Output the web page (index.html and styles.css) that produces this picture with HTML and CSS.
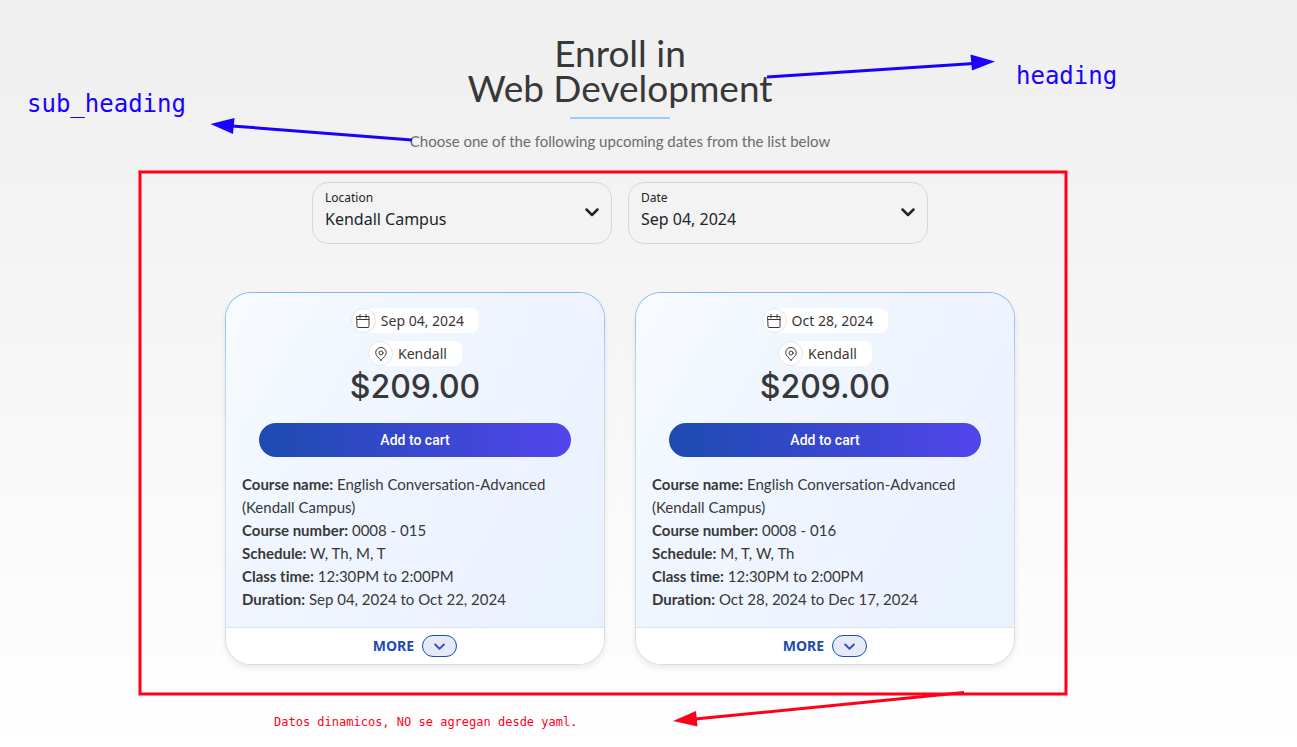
FILE: index.html
```
<!DOCTYPE html>
<html lang="en">
  <head>
    <meta charset="utf-8" />
    <title>Enroll in Web Development</title>
    <link rel="stylesheet" href="styles.css">
  </head>
  <body>
    <svg class="icon-defs" aria-hidden="true">
      <symbol id="icon-calendar" viewBox="0 0 14 14">
        <path d="M1 2.500h12v10a1 1 0 0 1-1 1H2a1 1 0 0 1-1-1zM1 5.500h12M4 .5v3.500M10 .5v3.500" />
      </symbol>
      <symbol id="icon-pin" viewBox="0 0 14 14">
        <path d="M7 13.300C4.500 10.500 1.700 8.300 1.700 5.700a5.300 5.200 0 0 1 10.600 0C12.300 8.300 9.500 10.500 7 13.300z" />
        <circle cx="7" cy="6" r="2" />
      </symbol>
      <symbol id="icon-chevron" viewBox="0 0 14 14">
        <path d="M1.500 4.500 7 10l5.500-5.500" />
      </symbol>
    </svg>

    <main class="page">
      <header class="intro">
        <h1 class="heading">Enroll in<br />Web Development</h1>
        <p class="sub-heading">Choose one of the following upcoming dates from the list below</p>
      </header>

      <form class="filters">
        <div class="field">
          <label for="location">Location</label>
          <select id="location">
            <option>Kendall Campus</option>
          </select>
          <svg class="field-icon"><use href="#icon-chevron" /></svg>
        </div>
        <div class="field">
          <label for="date">Date</label>
          <select id="date">
            <option>Sep 04, 2024</option>
            <option>Oct 28, 2024</option>
          </select>
          <svg class="field-icon"><use href="#icon-chevron" /></svg>
        </div>
      </form>

      <section class="cards">
        <article class="card">
          <div class="card-body">
            <div class="tag">
              <span class="tag-icon"><svg><use href="#icon-calendar" /></svg></span>
              Sep 04, 2024
            </div>
            <div class="tag">
              <span class="tag-icon"><svg><use href="#icon-pin" /></svg></span>
              Kendall
            </div>
            <div class="price">$209.00</div>
            <button class="add-button" type="button">Add to cart</button>
            <div class="details">
              <div><strong>Course name:</strong> English Conversation-Advanced (Kendall Campus)</div>
              <div><strong>Course number:</strong> 0008 - 015</div>
              <div><strong>Schedule:</strong> W, Th, M, T</div>
              <div><strong>Class time:</strong> 12:30PM to 2:00PM</div>
              <div><strong>Duration:</strong> Sep 04, 2024 to Oct 22, 2024</div>
            </div>
          </div>
          <button class="more-button" type="button">
            MORE
            <span class="more-icon"><svg><use href="#icon-chevron" /></svg></span>
          </button>
        </article>

        <article class="card">
          <div class="card-body">
            <div class="tag">
              <span class="tag-icon"><svg><use href="#icon-calendar" /></svg></span>
              Oct 28, 2024
            </div>
            <div class="tag">
              <span class="tag-icon"><svg><use href="#icon-pin" /></svg></span>
              Kendall
            </div>
            <div class="price">$209.00</div>
            <button class="add-button" type="button">Add to cart</button>
            <div class="details">
              <div><strong>Course name:</strong> English Conversation-Advanced (Kendall Campus)</div>
              <div><strong>Course number:</strong> 0008 - 016</div>
              <div><strong>Schedule:</strong> M, T, W, Th</div>
              <div><strong>Class time:</strong> 12:30PM to 2:00PM</div>
              <div><strong>Duration:</strong> Oct 28, 2024 to Dec 17, 2024</div>
            </div>
          </div>
          <button class="more-button" type="button">
            MORE
            <span class="more-icon"><svg><use href="#icon-chevron" /></svg></span>
          </button>
        </article>
      </section>
    </main>

    <!-- notes drawn over the page -->
    <div class="notes">
      <svg class="note-lines" width="1297" height="747">
        <g class="blue">
          <path d="M767 77 974 63.500M412 140 232 126" />
          <path class="tip" d="M970.500 54.500 995 61.500 972 70.500zM210.500 124 234.500 118 233 134z" />
        </g>
        <g class="red">
          <rect x="140" y="172" width="926" height="522" />
          <path d="M964 692.500 695 719" />
          <path class="tip" d="M673 721 696 711 697.500 726.500z" />
        </g>
      </svg>
      <span class="note note-heading">heading</span>
      <span class="note note-sub">sub_heading</span>
      <span class="note note-data">Datos dinamicos, NO se agregan desde yaml.</span>
    </div>
  </body>
</html>
```
FILE: styles.css
```
* {
  box-sizing: border-box;
}

body {
  margin: 0;
  min-height: 100vh;
  position: relative;
  color: #383838;
  font-family: "Noto Sans", sans-serif;
  font-size: 14px;
  font-variant-ligatures: none;
  background: linear-gradient(#efefef, #f2f2f2 22%, #fff);
}

.icon-defs {
  display: none;
}

svg {
  display: block;
  fill: none;
  stroke: currentColor;
  stroke-linecap: round;
  stroke-linejoin: round;
}

.page {
  max-width: 1240px;
  padding-top: 35px;
}

.intro {
  text-align: center;
}

.heading {
  margin: 0;
  font-family: Lato, sans-serif;
  font-size: 37px;
  font-weight: 400;
  line-height: 35px;
}

.heading::after {
  content: "";
  display: block;
  width: 100px;
  height: 2px;
  margin: 12px auto 0;
  background: #9ec8ff;
}

.sub-heading {
  margin: 11px 0 0;
  color: #6c6c6c;
  font-family: Lato, sans-serif;
  font-size: 15px;
  line-height: 22px;
}

.filters {
  display: flex;
  justify-content: center;
  gap: 16px;
  margin-top: 30px;
}

.field {
  display: grid;
  grid-template-columns: 1fr 14px;
  align-content: start;
  width: 300px;
  height: 62px;
  padding: 6px 12px;
  border: 1px solid #d3d8d8;
  border-radius: 16px;
  color: #212529;
}

.field label {
  font-size: 12px;
  line-height: 18px;
}

.field select {
  grid-area: 2 / 1 / 3 / 3;
  padding: 0;
  border: none;
  appearance: none;
  background: none;
  color: inherit;
  font: 16px/24px "Noto Sans", sans-serif;
}

.field-icon {
  grid-area: 1 / 2 / 3 / 3;
  align-self: end;
  width: 14px;
  height: 38px;
  stroke-width: 2.500px;
  pointer-events: none;
}

.cards {
  display: flex;
  justify-content: center;
  gap: 30px;
  margin-top: 48px;
}

.card {
  width: 380px;
  overflow: hidden;
  border: 1px solid transparent;
  border-radius: 26px;
  background:
    linear-gradient(#fff, #fff) padding-box,
    linear-gradient(#86b7f3, #b5d4fa 20%, #d9dce0 60%) border-box;
  box-shadow: 0 3px 6px rgba(0, 0, 0, 0.08);
}

.card-body {
  display: flex;
  flex-direction: column;
  align-items: center;
  gap: 8px;
  padding: 15px 16px 16px;
  background: linear-gradient(120deg, #f8fbff, #eff6ff 35%, #ebf2ff 90%, #e8f2ff);
}

.tag {
  display: flex;
  align-items: center;
  gap: 5px;
  height: 25px;
  padding-right: 15px;
  border-radius: 12px 8px 8px 12px;
  background: #fff;
  line-height: 18px;
}

.tag-icon {
  display: grid;
  place-items: center;
  width: 25px;
  height: 25px;
  border: 1px solid #e2e4ea;
  border-radius: 50%;
}

.tag-icon svg {
  width: 14px;
  height: 14px;
}

.price {
  font-family: Inter, sans-serif;
  font-size: 32px;
  font-weight: 500;
  line-height: 26px;
}

.add-button {
  width: calc(100% - 34px);
  height: 34px;
  margin: 15px 0 8px;
  border: none;
  border-radius: 17px;
  background: linear-gradient(90deg, #1d4bb0, #5145eb);
  color: #fff;
  font-family: Roboto, sans-serif;
  font-size: 14px;
  font-weight: 500;
}

.details {
  align-self: stretch;
  font-family: Lato, sans-serif;
  font-size: 15px;
  line-height: 23px;
}

.more-button {
  display: flex;
  align-items: center;
  justify-content: center;
  gap: 8px;
  width: 100%;
  height: 37px;
  padding: 0;
  border: none;
  border-top: 1px solid #dfe3ea;
  background: #fff;
  color: #1d4bb0;
  font: 700 14px/18px "Noto Sans", sans-serif;
}

.more-icon {
  display: grid;
  place-items: center;
  width: 35px;
  height: 22px;
  border: 1px solid #1d4bb0;
  border-radius: 11px;
  background: #e4ebf7;
}

.more-icon svg {
  width: 11px;
  height: 11px;
  color: #3b4ccb;
  stroke-width: 2.500px;
}

.notes {
  position: absolute;
  inset: 0;
  overflow: hidden;
  pointer-events: none;
}

.note-lines {
  stroke-width: 3px;
  stroke-linecap: butt;
  stroke-linejoin: miter;
}

.blue {
  color: #1a00ff;
}

.red {
  color: #ff0019;
}

.tip {
  fill: currentColor;
  stroke: none;
}

.note {
  position: absolute;
  color: #1a00ff;
  font-family: "DejaVu Sans Mono", monospace;
  font-size: 24px;
  line-height: 30px;
  white-space: nowrap;
}

.note-heading {
  left: 1016px;
  top: 61px;
}

.note-sub {
  left: 27px;
  top: 89px;
}

.note-data {
  left: 274px;
  top: 707px;
  color: #ff0019;
  font-size: 12px;
}
```
